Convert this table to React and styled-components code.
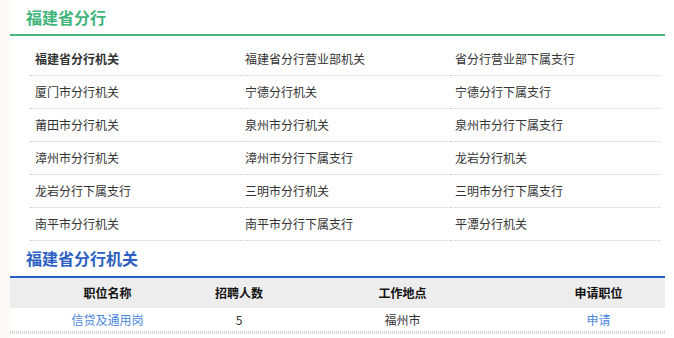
import React from "react";
import styled, { createGlobalStyle } from "styled-components";

const Global = createGlobalStyle`
  html, body { margin: 0; padding: 0; background: #fdf9f4; }
  body { font-family: "Noto Sans CJK SC", "Noto Sans", sans-serif; }
`;

const Page = styled.div`
  margin-left: 10px;
  background: #fff;
  height: 338px;
  padding-right: 9px;
  overflow: hidden;
`;

const Title = styled.div`
  height: ${(p) => p.$h}px;
  line-height: ${(p) => p.$h}px;
  padding-left: 16px;
  font-size: 16px;
  font-weight: bold;
  color: ${(p) => p.$color};
  border-bottom: 2px solid ${(p) => p.$line};
`;

const Grid = styled.div`
  display: grid;
  grid-template-columns: repeat(3, 210px);
  margin: 7px 0 0 20px;
`;

const Cell = styled.div`
  height: 32px;
  line-height: 32px;
  padding-left: 5px;
  font-size: 12px;
  color: #333;
  font-weight: ${(p) => (p.$bold ? "bold" : "normal")};
  border-bottom: 1px dotted #cfcfcf;
`;

const Row = styled.div`
  display: grid;
  grid-template-columns: 195px 68px 259px 133px;
  height: ${(p) => p.$h}px;
  line-height: ${(p) => p.$h}px;
  background: ${(p) => p.$bg || "transparent"};
  font-size: 12px;
`;

const Th = styled.div`
  text-align: center;
  font-weight: bold;
  color: #111;
`;

const Td = styled.div`
  text-align: center;
  color: ${(p) => (p.$link ? "#4a86dc" : "#333")};
`;

const DotRule = styled.div`
  height: 3px;
  background: repeating-linear-gradient(90deg, #d4d4d4 0 1px, transparent 1px 2px);
`;

const branches = [
  "福建省分行机关", "福建省分行营业部机关", "省分行营业部下属支行",
  "厦门市分行机关", "宁德分行机关", "宁德分行下属支行",
  "莆田市分行机关", "泉州市分行机关", "泉州市分行下属支行",
  "漳州市分行机关", "漳州市分行下属支行", "龙岩分行机关",
  "龙岩分行下属支行", "三明市分行机关", "三明市分行下属支行",
  "南平市分行机关", "南平市分行下属支行", "平潭分行机关",
];

export default function App() {
  return (
    <>
      <Global />
      <Page>
        <Title $h={34} $color="#3fb57b" $line="#45b97c">福建省分行</Title>
        <Grid>
          {branches.map((b, i) => (
            <Cell key={i} $bold={i === 0}>{b}</Cell>
          ))}
        </Grid>
        <Title $h={35} $color="#2d5fc2" $line="#2660c4">福建省分行机关</Title>
        <Row $h={30} $bg="#ededed">
          <Th>职位名称</Th>
          <Th>招聘人数</Th>
          <Th>工作地点</Th>
          <Th>申请职位</Th>
        </Row>
        <Row $h={23}>
          <Td $link>信贷及通用岗</Td>
          <Td>5</Td>
          <Td>福州市</Td>
          <Td $link>申请</Td>
        </Row>
        <DotRule />
      </Page>
    </>
  );
}
